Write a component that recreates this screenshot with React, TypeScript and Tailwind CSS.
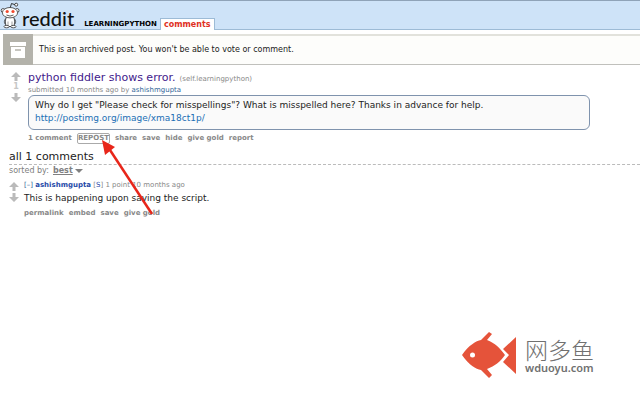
import React from 'react';

const Mascot: React.FC = () => (
  <svg viewBox="0 0 20 28" className="h-7 w-5 shrink-0" aria-hidden="true">
    <path d="M10 7.500 L11.500 2.500 L15 3.700" fill="none" stroke="#222" strokeWidth="0.9" />
    <circle cx="16.200" cy="3.700" r="1.500" fill="#fff" stroke="#222" strokeWidth="0.8" />
    <circle cx="3.200" cy="9.500" r="2" fill="#fff" stroke="#333" strokeWidth="0.8" />
    <circle cx="17" cy="9.500" r="2" fill="#fff" stroke="#333" strokeWidth="0.8" />
    <path d="M6.500 16 C5 19 5 23 6.500 25.500 H13.500 C15 23 15 19 13.500 16 Z" fill="#fff" stroke="#333" strokeWidth="0.8" />
    <path d="M6 17.500 C3.800 19 4 22 5.500 23.500 M14 17.500 C16.200 19 16 22 14.500 23.500" fill="none" stroke="#333" strokeWidth="0.8" />
    <path d="M8 20.500 V25 M12 20.500 V25" stroke="#777" strokeWidth="0.7" />
    <ellipse cx="6.600" cy="25.600" rx="2.600" ry="1.200" fill="#fff" stroke="#333" strokeWidth="0.8" />
    <ellipse cx="13.400" cy="25.600" rx="2.600" ry="1.200" fill="#fff" stroke="#333" strokeWidth="0.8" />
    <ellipse cx="10" cy="11.700" rx="7.600" ry="5.200" fill="#fff" stroke="#333" strokeWidth="0.8" />
    <circle cx="7.200" cy="10.500" r="1.600" fill="#f04a30" />
    <circle cx="13" cy="10.500" r="1.600" fill="#f04a30" />
    <path d="M6.500 14 Q10 16.200 13.500 14" fill="none" stroke="#333" strokeWidth="0.8" />
  </svg>
);

const VoteArrow: React.FC<{ label: string; down?: boolean }> = ({ label, down }) => (
  <button type="button" aria-label={label} className="block">
    <svg viewBox="0 0 10 9" className={`h-[9px] w-[10px] ${down ? 'rotate-180' : ''}`}>
      <path d="M5 0 L10 5 H6.500 V9 H3.500 V5 H0 Z" fill="#bababa" />
    </svg>
  </button>
);

const postActions = ['share', 'save', 'hide', 'give gold', 'report'];
const commentActions = ['permalink', 'embed', 'save', 'give gold'];

const Header: React.FC = () => (
  <header className="flex h-[30px] items-end border-t border-b border-t-[#8fa3b8] border-b-[#9dbbd6] bg-[#cee3f8]">
    <a href="#" className="flex items-end">
      <Mascot />
      <span className="ml-0.5 pb-px font-['Lato',sans-serif] text-[20px] leading-5 font-medium text-[#111]">reddit</span>
    </a>
    <a href="#" className="ml-[10px] text-[7px] leading-[9px] font-bold text-black">
      LEARNINGPYTHON
    </a>
    <nav className="ml-[3px] -mb-px border border-b-0 border-[#9dbbd6] bg-white px-[3px] pt-px">
      <a href="#" className="block text-[8px] leading-[10px] font-bold text-[#e0301e]">
        comments
      </a>
    </nav>
  </header>
);

const ArchiveNotice: React.FC = () => (
  <div className="mt-1 ml-[3px] flex h-[31px] items-center border-t-2 border-b border-t-[#e2e2dc] border-b-[#c0c0bc] bg-[#fdfdfb]">
    <div className="-mt-0.5 -mb-px flex h-[31px] w-[30px] items-center justify-center bg-[#b3b2aa]">
      <svg viewBox="0 0 18 16" className="h-4 w-[18px]" aria-hidden="true">
        <path d="M1 0 H17 V4 H1 Z M2 5 H16 V16 H2 Z" fill="#fff" />
        <path d="M6 8 H12" stroke="#b3b2aa" strokeWidth="1.500" />
      </svg>
    </div>
    <p className="ml-1.5 text-[8px] leading-3 text-[#222]">
      This is an archived post. You won't be able to vote or comment.
    </p>
  </div>
);

const Post: React.FC = () => (
  <article className="mt-[7px] flex pl-[11px]">
    <div className="mr-[7px] flex w-[10px] flex-col items-center">
      <VoteArrow label="upvote" />
      <span className="text-[8px] leading-3 font-bold text-[#c6c6c6]">1</span>
      <VoteArrow label="downvote" down />
    </div>
    <div className="min-w-0 flex-1">
      <h1 className="flex items-baseline text-[11px] leading-3">
        <a href="#" className="text-[#3f1a8b]">python fiddler shows error.</a>
        <a href="#" className="ml-1 text-[7px] text-[#888]">(self.learningpython)</a>
      </h1>
      <p className="text-[7px] leading-[10px] text-[#888]">
        submitted 10 months ago by <a href="#" className="text-[#336699]">ashishmgupta</a>
      </p>
      <div className="mr-[50px] rounded-md border border-[#7f93ad] bg-[#fafafa] px-1.5 pt-[3px] pb-1 text-[9px] leading-[13px] text-[#222]">
        <p>Why do I get "Please check for misspellings"? What is misspelled here? Thanks in advance for help.</p>
        <a href="#" className="text-[#1a6fb5]">http://postimg.org/image/xma18ct1p/</a>
      </div>
      <div className="mt-0.5 flex items-center gap-[5px] text-[7px] leading-3 font-bold text-[#888]">
        <a href="#">1 comment</a>
        <button type="button" className="rounded-xs border border-[#aaa] leading-[9px]">REPOST</button>
        {postActions.map((action) => (
          <a key={action} href="#">{action}</a>
        ))}
      </div>
    </div>
  </article>
);

const Comments: React.FC = () => (
  <section className="mt-1.5 pl-[9px]">
    <h2 className="border-b border-dashed border-[#bbb] text-[11px] leading-[14px] text-[#222]">all 1 comments</h2>
    <div className="flex items-center text-[8px] leading-[11px] text-[#808080]">
      sorted by:
      <button type="button" className="ml-1 flex items-center font-bold">
        <span className="underline">best</span>
        <svg viewBox="0 0 8 4" className="ml-0.5 h-1 w-2" aria-hidden="true">
          <path d="M0 0 H8 L4 4 Z" fill="#808080" />
        </svg>
      </button>
    </div>
    <div className="mt-[3px] flex">
      <div className="mt-[3px] mr-[5px] flex w-[10px] flex-col gap-0.5">
        <VoteArrow label="upvote comment" />
        <VoteArrow label="downvote comment" down />
      </div>
      <div>
        <p className="text-[7px] leading-3 text-[#888]">
          <button type="button" className="text-[#336699]">[–]</button>{' '}
          <a href="#" className="font-bold text-[#1f4aa8]">ashishmgupta</a> [<a href="#" className="text-[#1f4aa8]">S</a>]
          {' '}1 point 10 months ago
        </p>
        <p className="text-[9px] leading-[14px] text-[#222]">This is happening upon saving the script.</p>
        <div className="mt-0.5 flex gap-[5px] text-[7px] leading-3 font-bold text-[#888]">
          {commentActions.map((action) => (
            <a key={action} href="#">{action}</a>
          ))}
        </div>
      </div>
    </div>
  </section>
);

const Watermark: React.FC = () => (
  <div className="absolute top-[330px] right-[46px] flex items-center gap-2">
    <svg viewBox="0 0 55 50" className="h-[50px] w-[55px]" aria-hidden="true">
      <path d="M0 25 C7 15 14 11 19 10 L27 2 L30 4 L25 10 C33 13 38 18 43 25 C38 32 33 36 25 39 L30 45 L27 48 L19 40 C14 39 7 35 0 25 Z" fill="#e5533a" />
      <path d="M54 7 V44 L41 32 L47 25 L41 19 Z" fill="#e5533a" />
      <circle cx="10.500" cy="25" r="2.500" fill="#fff" />
    </svg>
    <div className="flex flex-col text-[#707070]">
      <div className="font-['Noto_Sans_CJK_SC',sans-serif] text-[23px] leading-[26px] font-light">网多鱼</div>
      <div className="font-['Noto_Sans',sans-serif] text-[11px] leading-3 font-semibold">wduoyu.com</div>
    </div>
  </div>
);

const App: React.FC = () => (
  <div className="relative min-h-screen bg-white font-['DejaVu_Sans',Verdana,sans-serif]">
    <Header />
    <main>
      <ArchiveNotice />
      <Post />
      <Comments />
    </main>
    <svg viewBox="0 0 56 80" className="pointer-events-none absolute top-[138px] left-[100px] h-20 w-14" aria-hidden="true">
      <path d="M52 76 L8 9" stroke="#e8261a" strokeWidth="2.500" />
      <path d="M2 2 L15 9 L5 17 Z" fill="#e8261a" />
    </svg>
    <Watermark />
  </div>
);

export default App;
